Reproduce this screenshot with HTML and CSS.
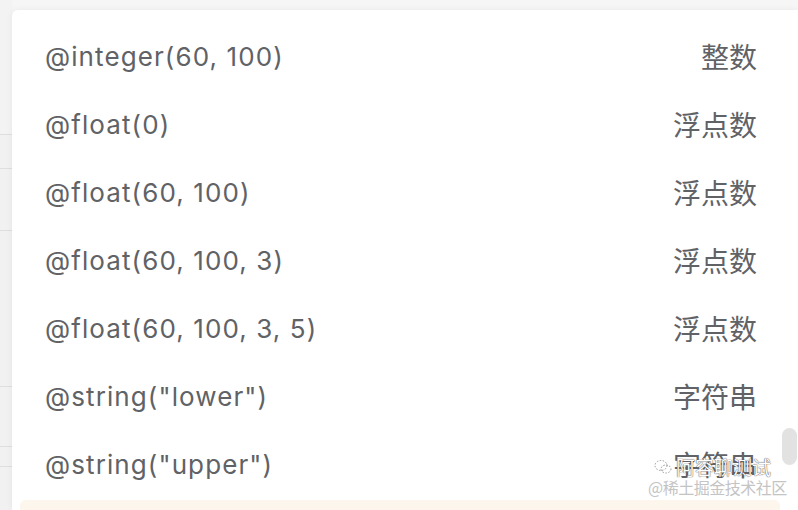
FILE: index.html
```html
<!DOCTYPE html>
<html lang="zh">
<head>
<meta charset="utf-8">
<link rel="stylesheet" href="styles.css">
</head>
<body>
<div class="page">
  <div class="table-edge">
    <div class="edge-row r1"></div>
    <div class="edge-row r2"></div>
    <div class="edge-row r3"></div>
    <div class="edge-row r4"></div>
    <div class="edge-row r5"></div>
    <div class="edge-row r6"></div>
    <div class="edge-row r7"></div>
  </div>
  <div class="dropdown">
    <ul class="list">
      <li class="item"><span class="code">@integer(60, 100)</span><span class="type">整数</span></li>
      <li class="item"><span class="code">@float(0)</span><span class="type">浮点数</span></li>
      <li class="item"><span class="code">@float(60, 100)</span><span class="type">浮点数</span></li>
      <li class="item"><span class="code">@float(60, 100, 3)</span><span class="type">浮点数</span></li>
      <li class="item"><span class="code">@float(60, 100, 3, 5)</span><span class="type">浮点数</span></li>
      <li class="item"><span class="code">@string("lower")</span><span class="type">字符串</span></li>
      <li class="item"><span class="code">@string("upper")</span><span class="type">字符串</span></li>
      <li class="item active"><span class="code">@string("number")</span><span class="type">字符串</span></li>
    </ul>
    <div class="scroll-thumb"></div>
  </div>
</div>
<div class="watermark">
  <div class="wm-line1">
    <svg class="wm-icon" width="18" height="16" viewBox="0 0 18 16"><ellipse cx="7" cy="6.5" rx="6" ry="5" fill="none" stroke="#9a9a9a" stroke-width="1" stroke-dasharray="1.5 1.5"/><ellipse cx="12" cy="10" rx="5" ry="4" fill="none" stroke="#9a9a9a" stroke-width="1" stroke-dasharray="1.5 1.5"/></svg>
    <span>阿容聊测试</span>
  </div>
  <div class="wm-line2">@稀土掘金技术社区</div>
</div>
</body>
</html>
```
FILE: styles.css
```css
html, body {
  margin: 0;
  padding: 0;
}
body {
  width: 798px;
  height: 510px;
  overflow: hidden;
  background: #f6f6f6;
  font-family: Inter, "Liberation Sans", "Noto Sans CJK SC", sans-serif;
  position: relative;
}
.page {
  display: flex;
  height: 510px;
}
.table-edge {
  width: 12px;
  flex: none;
  display: flex;
  flex-direction: column;
  background: #f1f1f1;
}
.edge-row {
  border-bottom: 1px solid #dedede;
  flex: none;
}
.r1 { height: 134px; background: #f3f3f3; }
.r2 { height: 33px; }
.r3 { height: 61px; }
.r4 { height: 155px; }
.r5 { height: 59px; }
.r6 { height: 19px; }
.r7 { flex: 1; border-bottom: none; }
.dropdown {
  flex: 1;
  margin-top: 10px;
  background: #fff;
  border-top-left-radius: 6px;
  box-shadow: 0 0 6px rgba(0, 0, 0, 0.06);
  position: relative;
  overflow: hidden;
}
.list {
  list-style: none;
  margin: 0;
  padding: 12px 0 0;
}
.item {
  height: 68px;
  margin: 0 18px 0 8px;
  padding: 0 23px 0 25px;
  display: flex;
  align-items: center;
  justify-content: space-between;
  color: #606266;
  border-radius: 6px;
}
.code {
  font-size: 26px;
  letter-spacing: 1.1px;
}
.type {
  font-family: "Noto Sans CJK SC", sans-serif;
  font-size: 28px;
}
.item.active {
  background: #fdf6ec;
  margin-top: 2px;
}
.scroll-thumb {
  position: absolute;
  right: 1px;
  top: 418px;
  width: 15px;
  height: 37px;
  border-radius: 8px;
  background: #e2e2e2;
}
.watermark {
  position: absolute;
  left: 648px;
  top: 456px;
  font-family: "Noto Sans CJK SC", sans-serif;
  white-space: nowrap;
}
.wm-line1 {
  display: flex;
  align-items: center;
  gap: 4px;
  padding-left: 6px;
  font-size: 19px;
  line-height: 22px;
  color: #fff;
  text-shadow: 0 0 1px #555, 0 0 1px #555;
}
.wm-line2 {
  font-size: 16px;
  line-height: 18px;
  letter-spacing: -0.5px;
  color: #c4c4c4;
  text-shadow: 0 0 1px #fff;
}
```
